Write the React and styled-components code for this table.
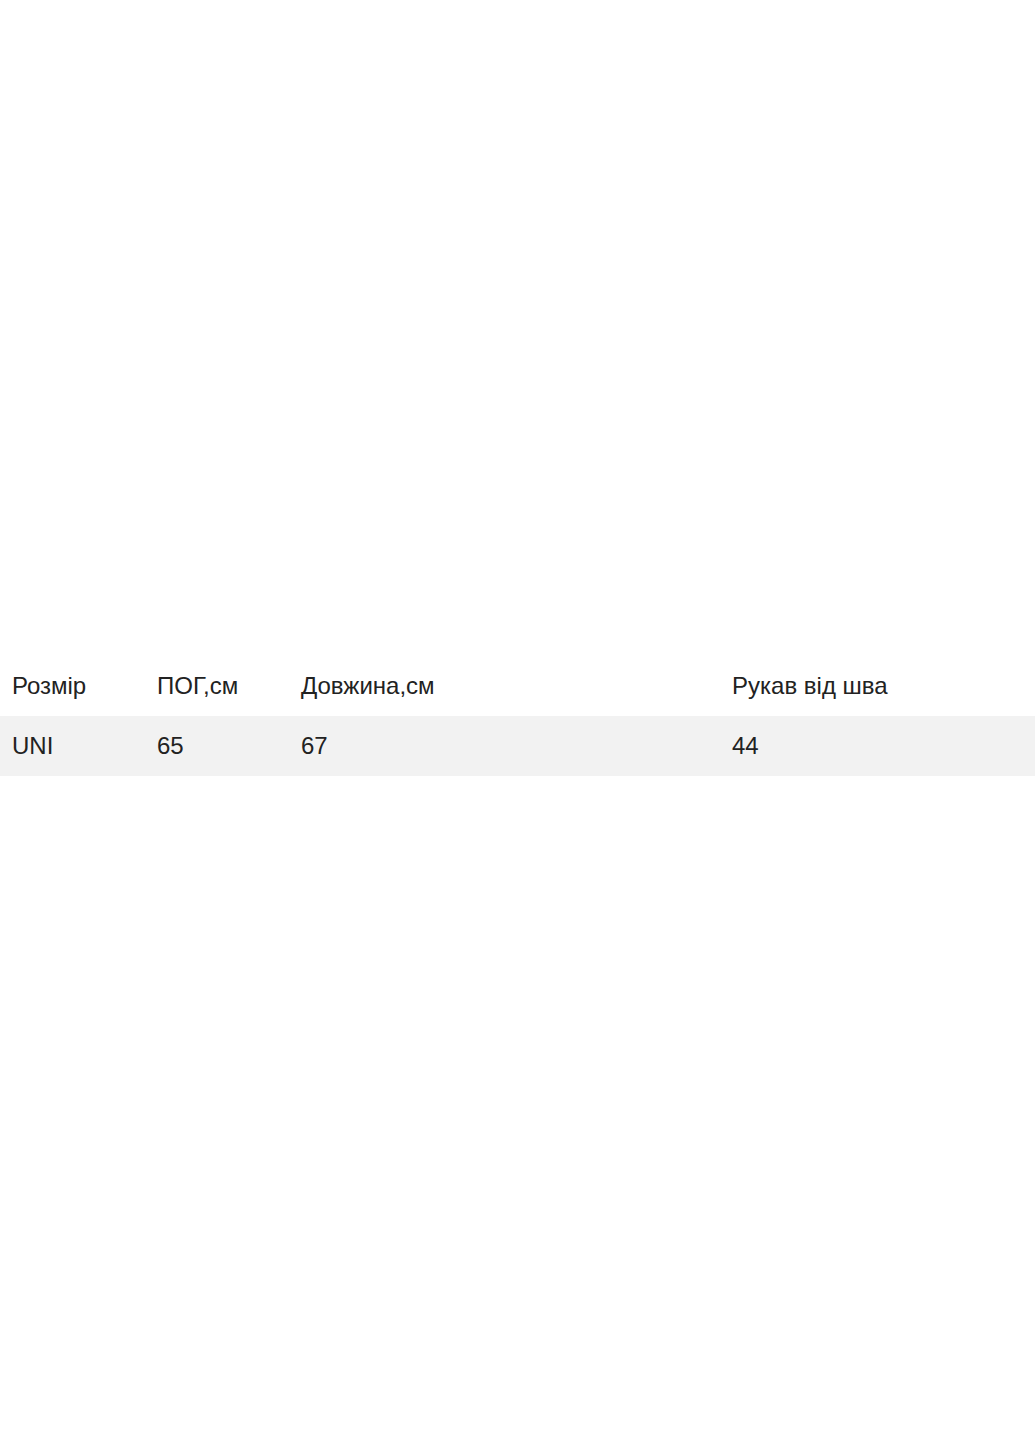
import React from "react";
import styled, { createGlobalStyle } from "styled-components";

const Global = createGlobalStyle`
  html, body { margin: 0; padding: 0; background: #fff; }
  body { font-family: "Liberation Sans", Arial, sans-serif; }
`;

const Page = styled.div`
  width: 1035px;
  height: 1440px;
  display: flex;
  flex-direction: column;
  padding-top: 655px;
  box-sizing: border-box;
`;

const Table = styled.table`
  width: 100%;
  border-collapse: collapse;
  table-layout: fixed;
  color: #222;
  font-size: 24px;
  line-height: 1;
`;

const Row = styled.tr`
  background: ${(p) => (p.$shaded ? "#f2f2f2" : "#fff")};
  height: ${(p) => p.$h}px;
`;

const Cell = styled.td`
  padding: 0 12px;
  vertical-align: middle;
  text-align: left;
  white-space: nowrap;
`;

const cols = [145, 144, 431, 315];
const header = ["Розмір", "ПОГ,см", "Довжина,см", "Рукав від шва"];
const rows = [["UNI", "65", "67", "44"]];

export default function App() {
  return (
    <>
      <Global />
      <Page>
        <Table>
          <colgroup>
            {cols.map((w, i) => (
              <col key={i} style={{ width: w }} />
            ))}
          </colgroup>
          <tbody>
            <Row $h={61}>
              {header.map((h) => (
                <Cell key={h}>{h}</Cell>
              ))}
            </Row>
            {rows.map((r, i) => (
              <Row key={i} $shaded $h={60}>
                {r.map((c, j) => (
                  <Cell key={j}>{c}</Cell>
                ))}
              </Row>
            ))}
          </tbody>
        </Table>
      </Page>
    </>
  );
}
